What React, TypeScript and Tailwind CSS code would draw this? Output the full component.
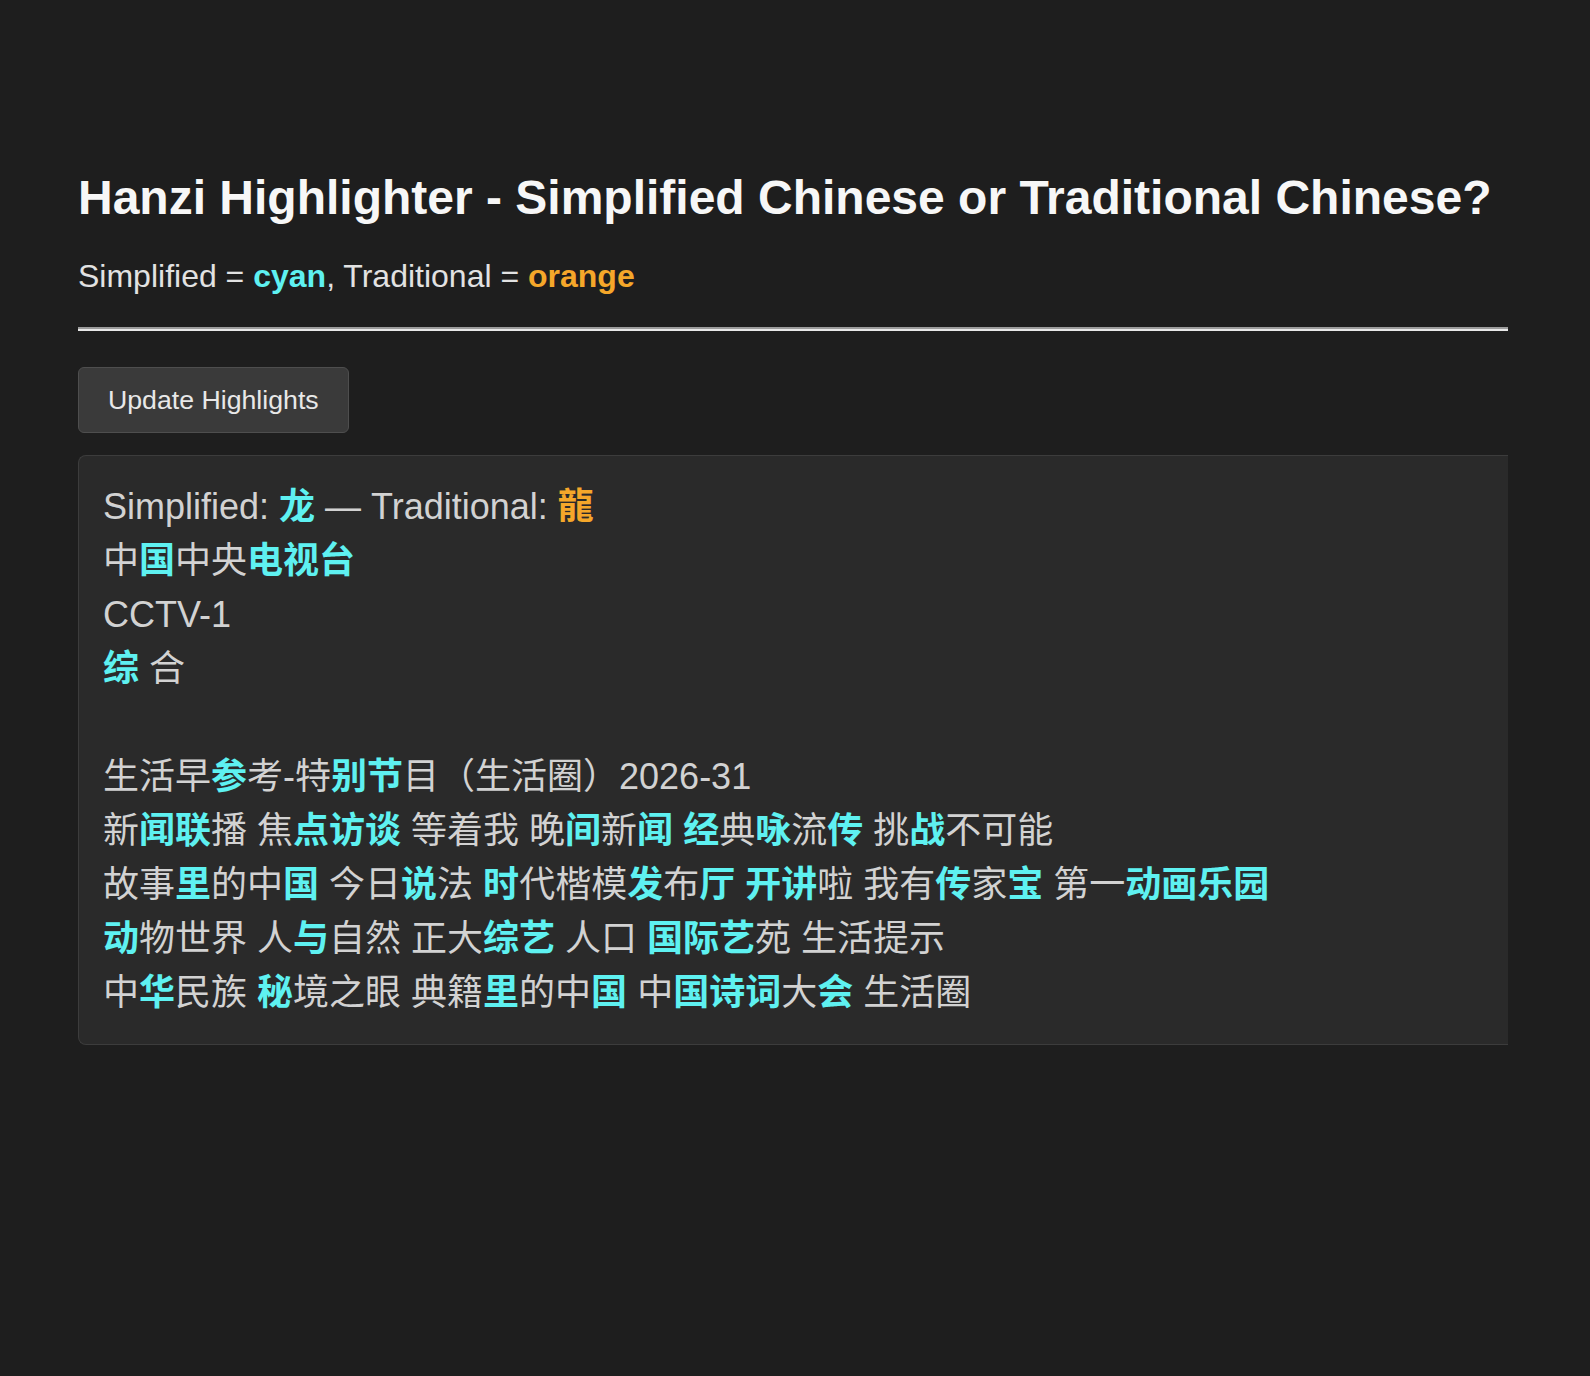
import React from "react";

const FONT = { fontFamily: '"Liberation Sans", "Noto Sans CJK SC", sans-serif' };

// [..] marks a simplified-only run
const lines = [
  "中[国]中央[电视台]",
  "CCTV-1",
  "[综] 合",
  "",
  "生活早[参]考-特[别节]目（生活圈）2026-31",
  "新[闻联]播 焦[点访谈] 等着我 晚[间]新[闻] [经]典[咏]流[传] 挑[战]不可能",
  "故事[里]的中[国] 今日[说]法 [时]代楷模[发]布[厅] [开讲]啦 我有[传]家[宝] 第一[动画乐园]",
  "[动]物世界 人[与]自然 正大[综艺] 人口 [国际艺]苑 生活提示",
  "中[华]民族 [秘]境之眼 典籍[里]的中[国] 中[国诗词]大[会] 生活圈",
];

function Line({ text }: { text: string }) {
  if (!text) return <div className="h-[54px]" />;
  const parts = text.split(/(\[[^\]]+\])/);
  return (
    <div className="whitespace-pre">
      {parts.map((p, i) =>
        p.startsWith("[") ? (
          <span key={i} className="font-bold text-[#5ef1f1]">
            {p.slice(1, -1)}
          </span>
        ) : (
          <span key={i}>{p}</span>
        )
      )}
    </div>
  );
}

export default function App() {
  return (
    <div className="min-h-[1376px] w-full bg-[#1e1e1e] pt-[170px]" style={FONT}>
      <div className="ml-[78px] w-[1430px] overflow-hidden">
        <h1 className="text-[48px] leading-[56px] font-bold text-[#f7f7f7]">
          Hanzi Highlighter - Simplified Chinese or Traditional Chinese?
        </h1>
        <p className="mt-[32px] text-[32px] leading-[36px] text-[#e2e2e2]">
          Simplified = <span className="font-bold text-[#5ef1f1]">cyan</span>, Traditional ={" "}
          <span className="font-bold text-[#f5a72a]">orange</span>
        </p>
        <div className="mt-[33px] h-0 border-t-2 border-b-2 border-t-[#9c9c9c] border-b-[#e8e8e8]" />
        <button className="mt-[36px] h-[66px] rounded-md border border-[#4e4e4e] bg-[#3a3a3a] px-[29px] text-[26.7px] text-[#e8e8e8]">
          Update Highlights
        </button>
        <div className="mt-[22px] rounded-l-lg border border-r-0 border-[#3c3c3c] bg-[#2a2a2a] px-6 py-6 text-[36px] leading-[54px] text-[#d2d2d2]">
          <div className="whitespace-pre">
            Simplified: <span className="font-bold text-[#5ef1f1]">龙</span> — Traditional:{" "}
            <span className="font-bold text-[#f5a72a]">龍</span>
          </div>
          {lines.map((l, i) => (
            <Line key={i} text={l} />
          ))}
        </div>
      </div>
    </div>
  );
}
